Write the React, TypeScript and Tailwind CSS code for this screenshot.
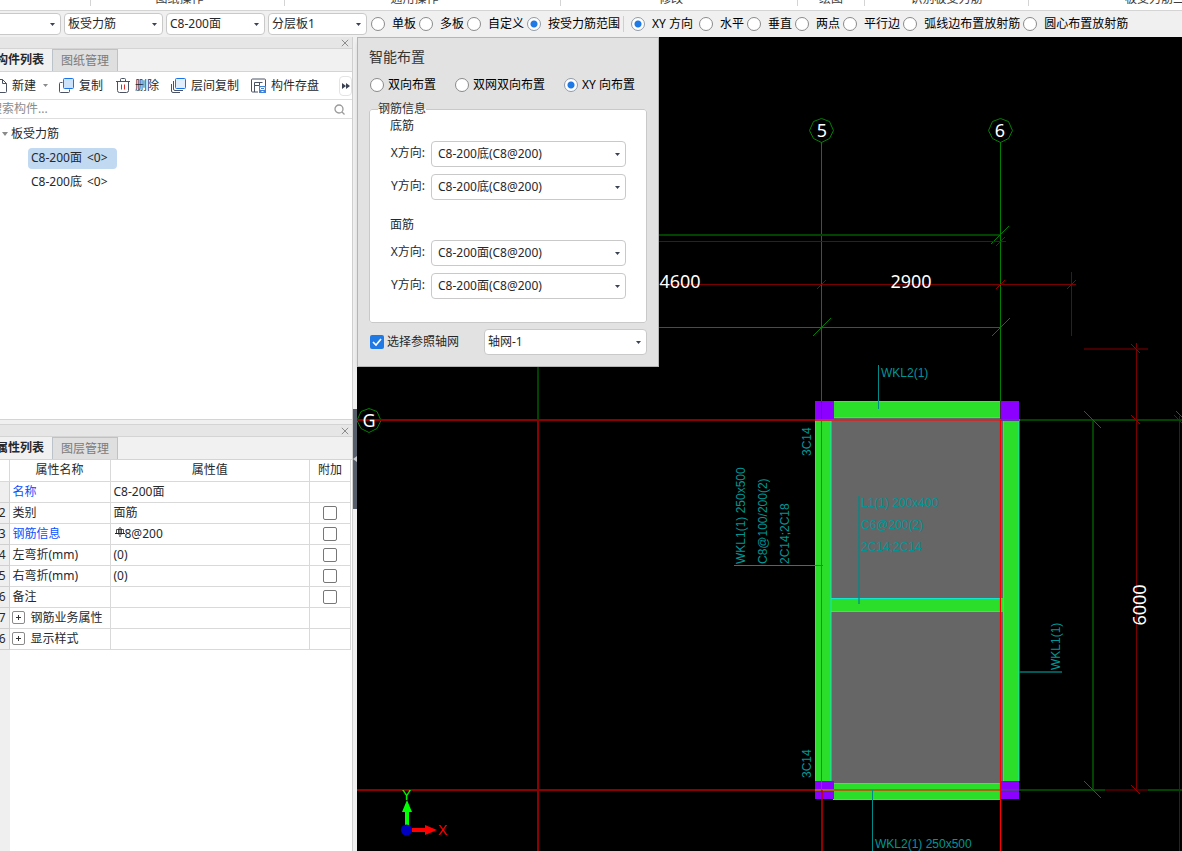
import React from "react";

const uiFont = "font-['Noto_Sans','Noto_Sans_CJK_SC',sans-serif]";

function Radio({ name, label, checked, gap = "gap-[7px]" }: { name: string; label: string; checked?: boolean; gap?: string }) {
  return (
    <label className={"flex shrink-0 items-center whitespace-nowrap text-black " + gap}>
      <input
        type="radio"
        name={name}
        defaultChecked={checked}
        className="h-3.5 w-3.5 shrink-0 appearance-none rounded-full border border-[#8a8a8a] bg-white checked:border-[#909aa6] checked:bg-[radial-gradient(circle,#1f7ae6_3px,#ffffff_4px)]"
      />
      {label}
    </label>
  );
}

function Dropdown({ value, label, id, className, pad = "pl-1" }: { value: string; label: string; id: string; className: string; pad?: string }) {
  return (
    <div className={"relative shrink-0 " + className}>
      <select
        id={id}
        aria-label={label}
        className={"h-full w-full appearance-none rounded border border-[#c9c9c9] bg-white pr-4 text-[#26282c] " + pad}
      >
        <option>{value}</option>
      </select>
      <svg className="pointer-events-none absolute right-1.5 top-1/2 -mt-px" width="5" height="3" viewBox="0 0 5 3">
        <path d="M0 0h5L2.5 3z" fill="#3b4252" />
      </svg>
    </div>
  );
}

const ribbon = [
  { label: "", width: "w-[91px]" },
  { label: "图纸操作", width: "w-[194px]" },
  { label: "通用操作", width: "w-[276px]" },
  { label: "修改", width: "w-[237px]" },
  { label: "绘图", width: "w-[67px]" },
  { label: "识别板受力筋", width: "w-[164px]" },
];

function Ribbon() {
  return (
    <div className="flex h-[11px] shrink-0 overflow-hidden border-b border-[#d4d4d4] bg-white text-[#3c3c3c]">
      {ribbon.map((g, i) => (
        <div key={i} className={"flex h-1.5 shrink-0 items-end justify-center border-r border-[#d4d4d4] leading-[14px] " + g.width}>
          <span className={i === 5 || i === 4 ? "" : "pr-4"}>{g.label}</span>
        </div>
      ))}
      <div className="flex h-1.5 items-end whitespace-nowrap pl-24 leading-[14px]">板受力筋二次编辑</div>
    </div>
  );
}

function OptionBar() {
  return (
    <div className="flex h-[26px] shrink-0 items-center overflow-hidden bg-[#f0f0f0] pb-px">
      <Dropdown id="floor" label="楼层" value="" className="-ml-10 mr-[3px] h-[22px] w-[101px]" />
      <Dropdown id="kind" label="构件类型" value="板受力筋" className="mr-[3px] h-[22px] w-[99px]" pad="pl-[3px]" />
      <Dropdown id="member" label="构件" value="C8-200面" className="mr-[3px] h-[22px] w-[99px]" pad="pl-[3px]" />
      <Dropdown id="layer" label="分层" value="分层板1" className="mr-1 h-[22px] w-[99px]" pad="pl-[3px]" />
      <div className="flex items-center gap-[3px]">
        <Radio name="range" label="单板" />
        <Radio name="range" label="多板" />
        <Radio name="range" label="自定义" />
        <Radio name="range" label="按受力筋范围" checked />
      </div>
      <div className="mx-[3px] h-4 w-px bg-[#cfcfcf]" />
      <div className="flex items-center gap-[3px] pl-1">
        <div className="min-w-[65px]">
          <Radio name="direction" label="XY 方向" checked />
        </div>
        <Radio name="direction" label="水平" />
        <Radio name="direction" label="垂直" />
        <Radio name="direction" label="两点" />
        <Radio name="direction" label="平行边" />
        <Radio name="direction" label="弧线边布置放射筋" />
        <Radio name="direction" label="圆心布置放射筋" />
      </div>
    </div>
  );
}

function PanelHead({ tabs }: { tabs: [string, string] }) {
  return (
    <>
      <div className="flex h-3 shrink-0 items-center justify-end border-b border-[#d4d4d4] bg-[#e6e6e6] pr-[3px]">
        <button aria-label="关闭">
          <svg width="8" height="8" viewBox="0 0 8 8" stroke="#8c8c8c" fill="none">
            <path d="M.8.8l6.4 6.4M7.2.8L.8 7.2" />
          </svg>
        </button>
      </div>
      <div className="flex h-[23px] shrink-0 border-b border-[#d4d4d4] bg-[#f1f1f1]">
        <button className="-ml-3 w-[65px] whitespace-nowrap border-r border-[#bcc2ca] bg-[#f1f1f1] font-bold text-[#26282c]">{tabs[0]}</button>
        <button className="w-[65px] border-r border-t border-[#bcc2ca] bg-[#dfdfdf] text-[#7b7b7b]">{tabs[1]}</button>
      </div>
    </>
  );
}

function Tool({ label, icon, className }: { label: string; icon: React.ReactNode; className?: string }) {
  return (
    <button className={"flex shrink-0 items-center gap-[5px] whitespace-nowrap " + (className ?? "")}>
      {icon}
      {label}
    </button>
  );
}

function MemberPanel() {
  return (
    <section className="flex h-[383px] shrink-0 flex-col border-b border-[#d4d4d4] bg-white">
      <PanelHead tabs={["构件列表", "图纸管理"]} />
      <div className="flex h-7 shrink-0 items-center overflow-hidden border-b border-[#dedede] text-[#26282c]">
        <Tool
          label="新建"
          className="-ml-[5px]"
          icon={
            <svg width="12" height="16" viewBox="0 0 12 16" fill="none" stroke="#4a5264">
              <path d="M.5 1.5h7l4 4v8q0 1-1 1h-10zM7.5 1.5v4h4" />
            </svg>
          }
        />
        <svg className="ml-[7px] mr-[11px]" width="5" height="3" viewBox="0 0 5 3">
          <path d="M0 0h5L2.5 3z" fill="#8a8a8a" />
        </svg>
        <Tool
          label="复制"
          className="mr-[13px]"
          icon={
            <svg width="15" height="16" viewBox="0 0 15 16" fill="none">
              <path d="M3.5 4.5H1.500q-1 0-1 1v8q0 1 1 1h8q1 0 1-1v-2" stroke="#4a5264" />
              <rect x="4.5" y=".5" width="10" height="10" rx="1" fill="#cfe2fb" stroke="#1a73e8" />
            </svg>
          }
        />
        <Tool
          label="删除"
          className="mr-3"
          icon={
            <svg width="14" height="16" viewBox="0 0 14 16" fill="none" stroke="#4a5264">
              <path d="M0 3.5h14M4.5 3V1.500q0-1 1-1h3q1 0 1 1V3M1.500 3.5v9q0 2 2 2h7q2 0 2-2v-9" />
              <path d="M5.5 6.5v5M8.5 6.5v5" stroke="#e02a2a" />
            </svg>
          }
        />
        <Tool
          label="层间复制"
          className="mr-3"
          icon={
            <svg width="15" height="16" viewBox="0 0 15 16" fill="none">
              <path d="M2.5 3v8q0 1.5 1.5 1.5h8M.5 6v7q0 1.5 1.5 1.5h7" stroke="#4a5264" />
              <rect x="4.5" y=".5" width="10" height="10" rx="1" fill="#e3eefd" stroke="#1a73e8" />
            </svg>
          }
        />
        <Tool
          label="构件存盘"
          icon={
            <svg width="15" height="16" viewBox="0 0 15 16" fill="none">
              <path d="M14.5 8V2q0-1-1-1H1.500q-1 0-1 1v11q0 1 1 1H7M3.5 14V4.5h8M3.5 7.5h5V4.5" stroke="#4a5264" />
              <rect x="8" y="8" width="7" height="7" fill="#3f82dc" />
              <path d="M9.5 9.5h4v2h-4zM10.5 13.5h2" stroke="#fff" />
            </svg>
          }
        />
        <button aria-label="更多" className="ml-auto flex h-5 w-[13px] shrink-0 items-center justify-center rounded border border-[#e4e4e4]">
          <svg width="8" height="6" viewBox="0 0 8 6" fill="#3b4252">
            <path d="M0 0l4 3-4 3zM4 0l4 3-4 3z" />
          </svg>
        </button>
      </div>
      <div className="flex h-[19px] shrink-0 items-center border-b border-[#dedede] pr-[7px]">
        <input aria-label="搜索构件" placeholder="搜索构件..." className="-ml-2.5 min-w-0 flex-1 bg-transparent outline-none placeholder:text-[#8c8c8c]" />
        <svg width="11" height="11" viewBox="0 0 11 11" fill="none" stroke="#9a9a9a" strokeWidth="1.3">
          <circle cx="5" cy="5" r="4" />
          <path d="M8 8l2.5 2.5" />
        </svg>
      </div>
      <ul className="pt-[3px] text-[#26282c]">
        <li>
          <div className="flex h-6 items-center gap-[3px] pl-[2px]">
            <svg width="6" height="4" viewBox="0 0 6 4">
              <path d="M0 0h6L3 4z" fill="#8a8a8a" />
            </svg>
            板受力筋
          </div>
          <ul className="pl-7">
            <li className="flex h-6 items-center">
              <span className="flex h-[21px] w-[89px] items-center gap-[5px] rounded-sm bg-[#c2d9f2] pl-[3px]">
                C8-200面 <span>&lt;0&gt;</span>
              </span>
            </li>
            <li className="flex h-6 items-center gap-[5px] pl-[3px]">
              C8-200底 <span>&lt;0&gt;</span>
            </li>
          </ul>
        </li>
      </ul>
    </section>
  );
}

const properties = [
  { no: "1", name: "名称", value: "C8-200面", link: true },
  { no: "2", name: "类别", value: "面筋", check: true },
  { no: "3", name: "钢筋信息", value: "8@200", link: true, check: true, rebar: true },
  { no: "4", name: "左弯折(mm)", value: "(0)", check: true },
  { no: "5", name: "右弯折(mm)", value: "(0)", check: true },
  { no: "6", name: "备注", value: "", check: true },
  { no: "7", name: "钢筋业务属性", value: "", group: true },
  { no: "16", name: "显示样式", value: "", group: true },
];

function PropertyPanel() {
  return (
    <section className="mt-1 flex min-h-0 flex-1 flex-col overflow-hidden border-t border-[#d4d4d4] bg-white">
      <PanelHead tabs={["属性列表", "图层管理"]} />
      <div className="flex min-h-0 flex-1 flex-col overflow-hidden">
        <table className="-ml-[13px] w-[364px] table-fixed border-collapse text-[#26282c]">
          <colgroup>
            <col className="w-[22px]" />
            <col className="w-[101px]" />
            <col />
            <col className="w-[41px]" />
          </colgroup>
          <thead>
            <tr className="h-[21px]">
              <th className="border-b border-r border-[#d9d9d9]" />
              <th className="border-b border-r border-[#d9d9d9] p-0 font-normal">属性名称</th>
              <th className="border-b border-r border-[#d9d9d9] p-0 font-normal">属性值</th>
              <th className="border-b border-r border-[#d9d9d9] p-0 font-normal">附加</th>
            </tr>
          </thead>
          <tbody>
            {properties.map((p) => (
              <tr key={p.no} className="h-[21px]">
                <td className="border-b border-r border-[#d0d0d0] bg-[#efefef] p-0 pr-[3px] text-right leading-4">{p.no === "1" ? "" : p.no}</td>
                <td className={"border-b border-r border-[#d9d9d9] p-0 leading-4 " + (p.group ? "pl-[2px]" : "pl-[3px]") + (p.link ? " text-[#0a50ff]" : "")}>
                  <span className="flex items-center whitespace-nowrap">
                    {p.group && (
                      <button aria-label={"展开" + p.name} className="mr-1.5 flex h-[13px] w-[13px] items-center justify-center rounded-[2px] border border-[#8a8a8a]">
                        <svg width="5" height="5" viewBox="0 0 5 5" stroke="#333">
                          <path d="M0 2.5h5M2.5 0v5" />
                        </svg>
                      </button>
                    )}
                    {p.name}
                  </span>
                </td>
                <td className="border-b border-r border-[#d9d9d9] p-0 pl-[3px] leading-4">
                  <span className="flex items-center">
                    {p.rebar && (
                      <svg className="mb-1 ml-px" width="10" height="10" viewBox="0 0 10 10" fill="none" stroke="#222">
                        <path d="M5 0v10M0 6.5h10" />
                        <path d="M1.5 6.500v-4h7v4M3.500 1.500v6M6.500 1.500v6" strokeWidth=".8" />
                      </svg>
                    )}
                    {p.value}
                  </span>
                </td>
                <td className="border-b border-r border-[#d9d9d9] p-0 leading-4">
                  {p.check && (
                    <input
                      type="checkbox"
                      aria-label={p.name + "附加"}
                      className="mx-auto block h-3.5 w-3.5 appearance-none rounded-[2px] border border-[#777777] bg-white"
                    />
                  )}
                </td>
              </tr>
            ))}
          </tbody>
        </table>
        <div className="w-2.5 flex-1 bg-[#efefef]" />
      </div>
    </section>
  );
}

function Field({ id, axis, value }: { id: string; axis: string; value: string }) {
  return (
    <div className="mb-[7px] flex h-[26px] items-center gap-1.5">
      <label htmlFor={id} className="w-[35px] shrink-0 whitespace-nowrap pb-0.5 text-right">
        {axis}方向:
      </label>
      <Dropdown id={id} label={axis + "方向"} value={value} className="h-[26px] w-[195px]" pad="pl-1.5" />
    </div>
  );
}

function LayoutDialog() {
  return (
    <div
      role="dialog"
      aria-label="智能布置"
      className="absolute left-0 top-0 w-[302px] border border-[#b5b5b5] bg-[#e2e2e2] px-[11px] pb-[11px] pt-[9px] text-[#26282c] shadow-md"
    >
      <h2 className="text-sm leading-5 text-[#333]">智能布置</h2>
      <div className="mt-2.5 flex h-4 items-center pl-px">
        <div className="w-[85px]">
          <Radio name="mode" label="双向布置" gap="gap-1" />
        </div>
        <div className="w-[109px]">
          <Radio name="mode" label="双网双向布置" gap="gap-1" />
        </div>
        <Radio name="mode" label="XY 向布置" gap="gap-1" checked />
      </div>
      <fieldset className="mt-2 min-w-0 rounded-[3px] border border-[#c9c9c9] bg-white px-5 pb-4">
        <legend className="-ml-3 h-4 leading-4 text-[#333]">钢筋信息</legend>
        <p className="mb-1.5 leading-[18px]">底筋</p>
        <Field id="bx" axis="X" value="C8-200底(C8@200)" />
        <Field id="by" axis="Y" value="C8-200底(C8@200)" />
        <p className="mb-1.5 mt-4 leading-[18px]">面筋</p>
        <Field id="tx" axis="X" value="C8-200面(C8@200)" />
        <Field id="ty" axis="Y" value="C8-200面(C8@200)" />
      </fieldset>
      <div className="mt-1.5 flex items-center justify-between pl-px">
        <label className="flex items-center gap-[3px]">
          <span className="relative flex">
            <input type="checkbox" defaultChecked className="h-3.5 w-3.5 appearance-none rounded-[2px] bg-[#1f7ae6]" />
            <svg className="pointer-events-none absolute left-0 top-0" width="14" height="14" viewBox="0 0 14 14" fill="none" stroke="#fff" strokeWidth="1.6">
              <path d="M3 7l3 3 5-6" />
            </svg>
          </span>
          选择参照轴网
        </label>
        <Dropdown id="axis" label="轴网" value="轴网-1" className="h-[26px] w-[163px]" pad="pl-[3px]" />
      </div>
    </div>
  );
}

function Drawing() {
  return (
    <svg className="absolute inset-0 h-full w-full" viewBox="357 37 825 814" preserveAspectRatio="xMinYMin slice" fill="none">
      <g stroke="#008000">
        <path d="M821.5 142v259M1000.5 142v259M659 327.5h341" />
        <path d="M538 360v60M659 235h341M1019 420h163M1093 420v370" stroke="#004400" strokeWidth="2" />
        <path d="M1019 790h86M1148 790h34" stroke="#004400" strokeWidth="2" />
        <path d="M991 244l18-18M813 336l18-18M992 336l18-18M1084 411l17 17M1084 781l17 17M1176 411l6 6" />
        <path d="M821.5 118.500l8 3 4 9-4 8-8 4-8-4-4-8 4-9zM1000.5 118.500l8 3 4 9-4 8-8 4-8-4-4-8 4-9zM369 408.500l8 3 4 9-4 8-8 4-8-4-4-8 4-9z" />
      </g>
      <g stroke="#7a0000">
        <path d="M659 241.500h347M659 284.500h417M1071.500 272v64M1136.500 343v447M1179.500 416v435" />
        <path d="M1084 349h64M1105 790h43" stroke="#440000" strokeWidth="2" />
        <path d="M996 246l9-9M817 289l9-9M996 289l9-9M1067 289l9-9M1131 344l9 9M1131 415l9 9M1131 785l9 9M1174 415l8 8" stroke="#960000" />
      </g>

      <path d="M831 418h172v366H831z" fill="#666666" />
      <path d="M815 419h16v362h-16zM1003 419h16v362h-16zM833 401h168v17H833zM833 783h168v17H833zM831 598h172v14H831z" fill="#2ade2a" />
      <path d="M815.5 419v362M831 419v362M1003.5 419v362M1019 419v362M833 401.500h168M833 417.500h168M833 783.500h168M833 799.500h168M831 598.500h171M831 611.500h171" stroke="#10e6d0" />
      <path d="M815 401h19v19h-19zM1001 401h18v19h-18zM815 781h19v18h-19zM1001 781h18v18h-18z" fill="#8b00ff" />
      <path d="M821.5 401v19M1000.5 401v19" stroke="#4b2a4b" />

      <path d="M357 420h458M357 790h458M538 420v431" stroke="#8b0000" strokeWidth="2" />
      <path d="M815 420h186" stroke="#c03030" strokeWidth="2" />
      <path d="M815 790h186" stroke="#a06a10" strokeWidth="2" />
      <path d="M1001 790h18M1001 420h18" stroke="#5a3a9a" strokeWidth="2" />
      <path d="M821.5 420v370" stroke="#c83c00" />
      <path d="M822 790v61" stroke="#c00000" strokeWidth="1.5" />
      <path d="M1000.5 420v431" stroke="#ff0000" strokeWidth="1.2" />

      <g stroke="#008b8b">
        <path d="M878.5 365v44M734 565.500h89M872.5 790v61" />
        <path d="M859 496v108M1019 672h43" strokeOpacity=".65" strokeWidth="2" />
      </g>
      <g fill="#009696" className="font-['Liberation_Sans',sans-serif] text-[12px]">
        <text x="881" y="377">WKL2(1)</text>
        <text x="861" y="507">L1(1) 200x400</text>
        <text x="861" y="529">C6@200(2)</text>
        <text x="861" y="551">2C14;2C14</text>
        <text x="875" y="848">WKL2(1) 250x500</text>
        <text transform="translate(811 456) rotate(-90)">3C14</text>
        <text transform="translate(811 778) rotate(-90)">3C14</text>
        <text transform="translate(745 564) rotate(-90)">WKL1(1) 250x500</text>
        <text transform="translate(767 564) rotate(-90)">C8@100/200(2)</text>
        <text transform="translate(789 564) rotate(-90)">2C14;2C18</text>
        <text transform="translate(1060 670) rotate(-90)">WKL1(1)</text>
      </g>
      <g fill="#ffffff" className={"text-[18px] " + uiFont} textAnchor="middle">
        <text x="822" y="137">5</text>
        <text x="1000" y="137">6</text>
        <text x="369" y="427">G</text>
        <text x="680" y="288">4600</text>
        <text x="911" y="288">2900</text>
        <text transform="translate(1146 605) rotate(-90)">6000</text>
      </g>
      <path d="M405 812v13h4v-13h3l-5-12-5 12z" fill="#00ff00" />
      <path d="M412 828v4h13v3l12-5-12-5v3z" fill="#ff0000" />
      <circle cx="406.5" cy="830" r="5.5" fill="#0000c0" />
      <text x="402" y="800" fill="#00ff00" className="font-['Liberation_Sans'] text-[14px]">Y</text>
      <text x="438" y="835" fill="#ff0000" className="font-['Liberation_Sans'] text-[14px]">X</text>
    </svg>
  );
}

export default function App() {
  return (
    <div className={"flex h-screen flex-col overflow-hidden bg-[#f0f0f0] text-xs leading-4 " + uiFont}>
      <Ribbon />
      <OptionBar />
      <div className="flex min-h-0 flex-1">
        <aside className="flex w-[353px] shrink-0 flex-col border-r border-[#d0d0d0]">
          <MemberPanel />
          <PropertyPanel />
        </aside>
        <div className="w-1 shrink-0 bg-[#f0f0f0] pt-[372px]">
          <button aria-label="收起面板" className="flex h-[100px] w-1 items-center bg-[#565e6c]">
            <svg width="4" height="6" viewBox="0 0 4 6">
              <path d="M4 0v6L0 3z" fill="#c8ccd2" />
            </svg>
          </button>
        </div>
        <main className="relative min-w-0 flex-1 bg-black">
          <Drawing />
          <LayoutDialog />
        </main>
      </div>
    </div>
  );
}
